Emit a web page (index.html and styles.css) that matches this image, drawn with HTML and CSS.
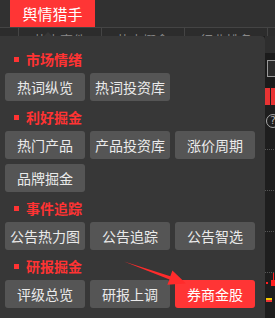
FILE: index.html
```html
<!DOCTYPE html>
<html lang="zh-CN">
<head>
    <meta charset="UTF-8">
    <meta name="viewport" content="width=device-width, initial-scale=1.0">
    <title>舆情猎手</title>
    <link rel="stylesheet" href="styles.css">
</head>
<body>
    <div class="page">
        <div class="topbar">
            <div class="tab active">舆情猎手</div>
        </div>
        <div class="subtabs">
            <div class="subtab">热点事件</div>
            <div class="subtab">热点概念</div>
            <div class="subtab">行业排名</div>
            <div class="subtab">资金流向</div>
        </div>
        <div class="main">
            <div class="popup">
                <div class="group-title">市场情绪</div>
                <div class="btn-row">
                    <div class="btn">热词纵览</div>
                    <div class="btn">热词投资库</div>
                </div>
                <div class="group-title">利好掘金</div>
                <div class="btn-row">
                    <div class="btn">热门产品</div>
                    <div class="btn">产品投资库</div>
                    <div class="btn">涨价周期</div>
                    <div class="btn">品牌掘金</div>
                </div>
                <div class="group-title">事件追踪</div>
                <div class="btn-row">
                    <div class="btn">公告热力图</div>
                    <div class="btn">公告追踪</div>
                    <div class="btn">公告智选</div>
                </div>
                <div class="group-title">研报掘金</div>
                <div class="btn-row">
                    <div class="btn">评级总览</div>
                    <div class="btn">研报上调</div>
                    <div class="btn red">券商金股</div>
                </div>
            </div>
            <div class="side">
                <div class="side-head"></div>
                <div class="side-dark">
                    <div class="side-box"></div>
                </div>
                <div class="side-red"><span></span><span></span></div>
                <div class="side-help">?</div>
                <div class="side-chart">
                    <div class="dots first"></div>
                    <div class="dots"></div>
                    <div class="dots"></div>
                    <div class="dots"></div>
                    <div class="candle"><i class="dot"></i><i class="wick"></i><i class="body"></i></div>
                    <div class="ma yellow"></div>
                    <div class="ma redline"></div>
                </div>
            </div>
        </div>
        <svg class="arrow" viewBox="0 0 275 318" width="275" height="318">
            <polygon points="124,261.5 170.3,276.3 172.4,270.6 186,283.5 167.3,284.8 169.5,279.4" fill="#ff2b2b"/>
        </svg>
    </div>
</body>
</html>
```

FILE: styles.css
```css
body{
    margin: 0;
    background-color: #1e1e1e;
    font-family: "Noto Sans CJK SC", "Microsoft YaHei", sans-serif;
}

.page{
    position: relative;
    width: 275px;
    height: 318px;
    overflow: hidden;
}

.topbar{
    height: 28px;
    background-color: #313131;
    padding-left: 10px;
    border-bottom: 1px solid #444;
    box-sizing: border-box;
    display: flex;
}

.tab{
    width: 85px;
    line-height: 28px;
    text-align: center;
    font-size: 15px;
    color: #fff;
}
.tab.active{
    background-color: #ff3535;
}

.subtabs{
    height: 8px;
    background-color: #2c2c2c;
    display: flex;
    padding-left: 18px;
    overflow: hidden;
}
.subtab{
    flex: 0 0 82px;
    border-left: 1px solid #444;
    padding-top: 4px;
    font-size: 13px;
    line-height: 16px;
    color: #888;
    text-align: center;
}

.main{
    display: flex;
    height: 282px;
}

.popup{
    position: relative;
    width: 265px;
    flex: 0 0 265px;
    background-color: #373737;
    border-top-right-radius: 4px;
    padding: 13px 5px 0 5px;
    box-sizing: border-box;
}
.popup::before{
    content: "";
    position: absolute;
    left: 44px;
    top: -4px;
    border-left: 4px solid transparent;
    border-right: 4px solid transparent;
    border-bottom: 4px solid #373737;
}

.group-title{
    display: flex;
    align-items: center;
    gap: 7px;
    height: 20px;
    margin: 6px 0 4px 9px;
    font-size: 14px;
    font-weight: bold;
    color: #ff3333;
}
.group-title:first-child{
    margin-top: 0;
}
.group-title::before{
    content: "";
    width: 5px;
    height: 5px;
    background-color: #ff3333;
}

.btn-row{
    display: flex;
    flex-wrap: wrap;
    gap: 5px;
}

.btn{
    width: 80px;
    height: 28px;
    line-height: 28px;
    border-radius: 3px;
    background-color: #555;
    color: #eaeaea;
    font-size: 14px;
    text-align: center;
}
.btn.red{
    background-color: #ff3535;
    color: #fff;
}

.side{
    flex: 1;
    background-color: #1e1e1e;
}
.side-head{
    height: 17px;
    background-color: #2e2e2e;
}
.side-dark{
    height: 35px;
    background-color: #1b1b1b;
    padding-top: 7px;
    box-sizing: border-box;
}
.side-box{
    height: 17px;
    margin-left: 2px;
    border: 1px solid #999;
    border-right: none;
    background-color: #2b2b2b;
    box-sizing: border-box;
}
.side-red{
    display: flex;
    gap: 1px;
    height: 17px;
}
.side-red span{
    flex: 0 0 5px;
    background-color: #e83333;
}
.side-help{
    width: 12px;
    height: 12px;
    margin: 9px 0 0 1px;
    border: 1px solid #aaa;
    border-radius: 50%;
    color: #aaa;
    font-size: 11px;
    line-height: 12px;
    text-align: center;
    font-family: "DejaVu Sans", sans-serif;
}
.side-chart{
    padding-top: 1px;
}
.dots{
    height: 0;
    border-top: 1px dotted #555;
    margin-top: 40px;
}
.dots.first{
    margin-top: 20px;
}
.candle{
    display: flex;
    align-items: flex-end;
    height: 13px;
    margin-top: 0;
}
.candle i{
    display: block;
    background-color: #ff2020;
}
.candle .dot{
    width: 2px;
    height: 2px;
    margin: 0 1px 2px 1px;
}
.candle .wick{
    width: 1px;
    height: 13px;
    margin-left: 4px;
}
.candle .body{
    width: 5px;
    height: 6px;
    margin-left: -3px;
}
.ma{
    width: 6px;
    height: 2px;
    margin-left: 1px;
}
.ma.yellow{
    margin-top: 12px;
    background-color: #f5c800;
}
.ma.redline{
    background-color: #e33;
}

.arrow{
    position: absolute;
    left: 0;
    top: 0;
    pointer-events: none;
}
```
